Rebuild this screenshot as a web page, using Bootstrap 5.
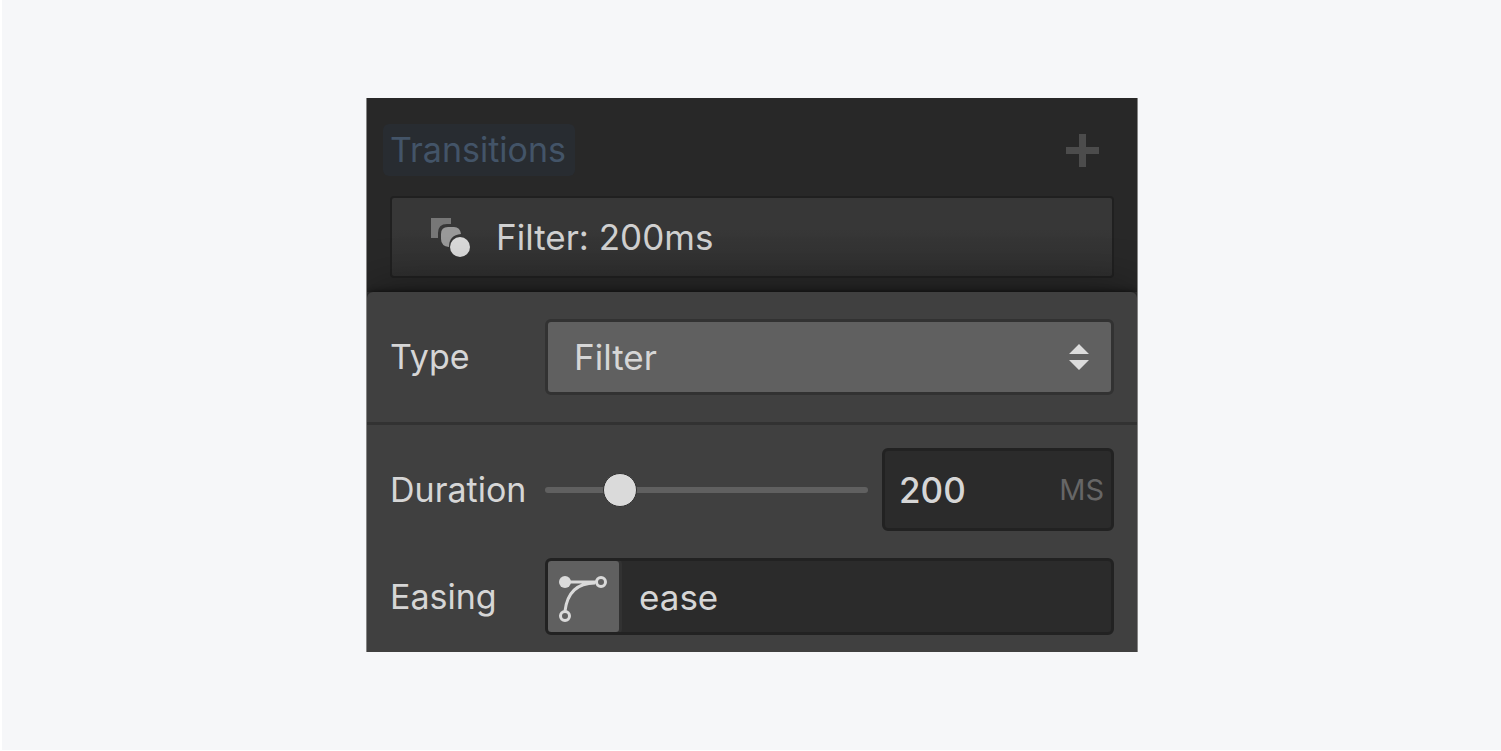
<!DOCTYPE html>
<html lang="en">
<head>
<meta charset="utf-8">
<meta name="viewport" content="width=device-width, initial-scale=1">
<title>Transitions</title>
<link href="https://cdn.jsdelivr.net/npm/bootstrap@5.3.0/dist/css/bootstrap.min.css" rel="stylesheet">
<style>
  :root { --edge: 3px; --ink: #d6d6d6; --label-col: 155px; }
  body {
    font-family: Inter, "Liberation Sans", sans-serif;
    font-size: 35px; line-height: 44px; color: var(--ink);
    background: #f6f7f9; border-left: 2px solid #fff; border-bottom: 1px solid #fff; padding-left: 1px;
  }
  .style-panel { width: 100%; max-width: 772px; background: #404040; border: solid #858585; border-width: 0 1px; overflow: hidden; }
  .panel-head { background: #282828; padding: 26px 23px 14px; }
  .head-row { margin: 0 0 20px -7px; }
  .section-tag { color: #435468; background: #282c31; border-radius: 6px; padding: 4px 9px 4px 7px; font-size: 34px; font-weight: 400; line-height: 44px; }
  .add-btn { padding: 0; margin-right: 15px; line-height: 0; color: #4c4c4c; border: 0; background: none; }
  .transition-item {
    width: 100%; color: #d0d0d0; background: linear-gradient(#373737 40%, #2f2f2f);
    border: 2px solid #202020; border-radius: 4px; padding: 17px 38px; gap: 24px; font-size: inherit; line-height: inherit;
  }
  .editor { position: relative; background: #404040; border-radius: 6px 6px 0 0; box-shadow: 0 0 6px #0b0b0b, 0 0 50px rgba(0,0,0,.45); }
  .type-part { padding: 27px 23px; border-bottom: 3px solid #323232; }
  .timing-part { padding: 23px 23px 17px; }
  .field-label { flex: 0 0 var(--label-col); font-size: 34px; }
  .type-select {
    color: var(--ink); border: var(--edge) solid #323232; border-radius: 6px; font-size: inherit; line-height: inherit;
    padding: 13px 60px 13px 26px; background-color: #606060;
    background-image: url("data:image/svg+xml,%3csvg xmlns='http://www.w3.org/2000/svg' viewBox='0 0 20 26'%3e%3cpath fill='%23dcdcdc' d='M10 0l10 10H0zM0 16h20L10 26z'/%3e%3c/svg%3e");
    background-size: 20px 26px; background-position: right 22px center;
  }
  .duration-range { height: 34px; margin-right: 14px; }
  .duration-range::-webkit-slider-runnable-track { height: 6px; background: #606060; border-radius: 3px; }
  .duration-range::-webkit-slider-thumb, .duration-range:focus::-webkit-slider-thumb, .duration-range::-webkit-slider-thumb:active {
    width: 34px; height: 34px; margin-top: -14px; background: #dadada; border: 1px solid #303030; border-radius: 50%; box-shadow: none;
  }
  .dark-box { background: #2b2b2b; border: var(--edge) solid #222; border-radius: 6px; overflow: hidden; }
  .duration-box { flex: 0 0 232px; height: 83px; padding: 0 7px 0 14px; }
  .bare-input { min-width: 0; color: var(--ink); background: none; border: 0; padding: 0; outline: 0; }
  .amount { font-weight: 500; }
  .unit { font-size: 29px; color: #666; }
  .easing-row { margin-top: 27px; }
  .easing-box { height: 77px; }
  .curve-btn { box-sizing: content-box; width: 71px; height: 71px; flex: none; margin: calc(-1 * var(--edge)); margin-right: 0; padding: 0; background: #606060; border: var(--edge) solid #323232; border-radius: 6px; line-height: 0; }
  .ease-input { padding-left: 17px; }
</style>
</head>
<body class="min-vh-100 d-flex align-items-center justify-content-center">
<main class="style-panel">
  <section class="panel-head">
    <div class="head-row d-flex align-items-center justify-content-between">
      <h1 class="section-tag m-0">Transitions</h1>
      <button class="add-btn" type="button" aria-label="Add transition">
        <svg width="33" height="33" viewBox="0 0 33 33" fill="currentColor"><path d="M13 0h7v13h13v7H20v13h-7V20H0v-7h13z"/></svg>
      </button>
    </div>
    <button class="transition-item d-flex align-items-center" type="button">
      <svg width="42" height="42" viewBox="0 0 42 42" aria-hidden="true">
        <path fill="#777" d="M1 2h20v6h-4Q8 8 8 17v5H1z"/>
        <path fill="#999" d="M18 11h6q6 0 7 7Q19 19 19 31Q11 30 11 23v-5q0-7 7-7z"/>
        <circle cx="30" cy="31" r="10" fill="#d9d9d9"/>
      </svg>
      <span>Filter: 200ms</span>
    </button>
  </section>
  <form class="editor">
    <div class="type-part d-flex align-items-center">
      <label class="field-label" for="type">Type</label>
      <select class="form-select type-select" id="type"><option>Filter</option></select>
    </div>
    <div class="timing-part">
      <div class="d-flex align-items-center">
        <label class="field-label" for="duration">Duration</label>
        <input class="form-range duration-range flex-fill" id="duration" type="range" min="0" max="1000" value="200">
        <div class="dark-box duration-box d-flex align-items-center">
          <input class="bare-input amount flex-fill" type="text" value="200" aria-label="Duration amount">
          <span class="unit">MS</span>
        </div>
      </div>
      <div class="d-flex align-items-center easing-row">
        <label class="field-label" for="easing">Easing</label>
        <div class="dark-box easing-box d-flex align-items-center flex-fill">
          <button class="curve-btn" type="button" aria-label="Edit easing curve">
            <svg width="52" height="52" viewBox="0 0 52 52" fill="none" stroke="#dadada" stroke-width="3">
              <path d="M7 11h31M7 40C9 24 17 12 37 12"/>
              <circle cx="7" cy="11" r="6" fill="#dadada" stroke="none"/>
              <circle cx="43" cy="11" r="4.500"/><circle cx="7" cy="45" r="4.500"/>
            </svg>
          </button>
          <input class="bare-input ease-input flex-fill" id="easing" type="text" value="ease">
        </div>
      </div>
    </div>
  </form>
</main>
<script src="https://cdn.jsdelivr.net/npm/bootstrap@5.3.0/dist/js/bootstrap.bundle.min.js"></script>
</body>
</html>
